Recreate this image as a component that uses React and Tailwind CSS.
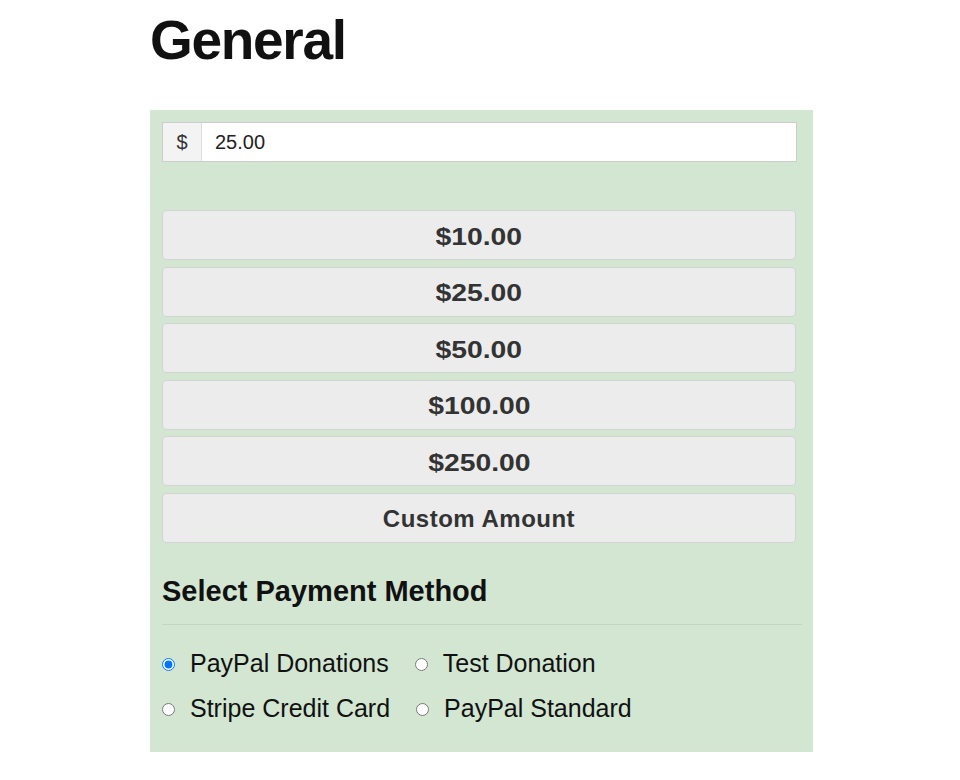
import { useState } from 'react';

const amounts = ['$10.00', '$25.00', '$50.00', '$100.00', '$250.00'];

const gateways = [
  { id: 'paypal', label: 'PayPal Donations' },
  { id: 'test', label: 'Test Donation' },
  { id: 'stripe', label: 'Stripe Credit Card' },
  { id: 'paypal-std', label: 'PayPal Standard' },
];

export default function App() {
  const [amount, setAmount] = useState('25.00');
  const [gateway, setGateway] = useState('paypal');

  return (
    <div className="min-h-[780px] bg-white font-['Liberation_Sans',Arial,sans-serif] text-[#111]">
      <div className="w-[663px] ml-[150px]">
        <h1 className="pt-[13px] text-[55px] font-bold leading-none tracking-[-1.3px] text-[#111]">General</h1>

        <form className="mt-[42px] bg-[#d2e6d2] pl-[12px] pr-[11px] pt-[12px] pb-[20px]" onSubmit={(e) => e.preventDefault()}>
          <div className="flex h-[40px] w-[635px] border border-[#cccccc] bg-white">
            <span className="flex w-[39px] items-center justify-center border-r border-[#dddddd] bg-[#f3f3f3] text-[20px] text-[#333]">$</span>
            <input
              value={amount}
              onChange={(e) => setAmount(e.target.value)}
              className="flex-1 px-[13px] text-[20px] text-[#222] outline-none"
            />
          </div>

          <div className="mt-[48px] flex w-[634px] flex-col gap-[6.5px]">
            {amounts.map((a) => (
              <button
                key={a}
                type="button"
                onClick={() => setAmount(a.slice(1))}
                className="h-[50px] rounded-[4px] border border-[#d3d3d3] bg-[#ececec] pt-[3px] text-[24px] font-bold text-[#333]"
              >
                <span className="inline-block scale-x-118">{a}</span>
              </button>
            ))}
            <button
              type="button"
              className="h-[50px] rounded-[4px] border border-[#d3d3d3] bg-[#ececec] pt-[3px] text-[24px] font-bold tracking-[0.5px] text-[#333]"
            >
              Custom Amount
            </button>
          </div>

          <h3 className="mt-[31px] border-b border-[#bfd6bf] pb-[15px] text-[29px] font-bold leading-[35px] text-[#111]">
            Select Payment Method
          </h3>

          <div className="mt-[17px] flex w-[500px] flex-wrap">
            {gateways.map((g) => (
              <label key={g.id} className="mr-[26px] flex h-[45px] items-center text-[25px] text-[#111]">
                <input
                  type="radio"
                  name="gateway"
                  checked={gateway === g.id}
                  onChange={() => setGateway(g.id)}
                  className="m-0 mr-[15px] h-[13px] w-[13px]"
                />
                {g.label}
              </label>
            ))}
          </div>
        </form>
      </div>
    </div>
  );
}
